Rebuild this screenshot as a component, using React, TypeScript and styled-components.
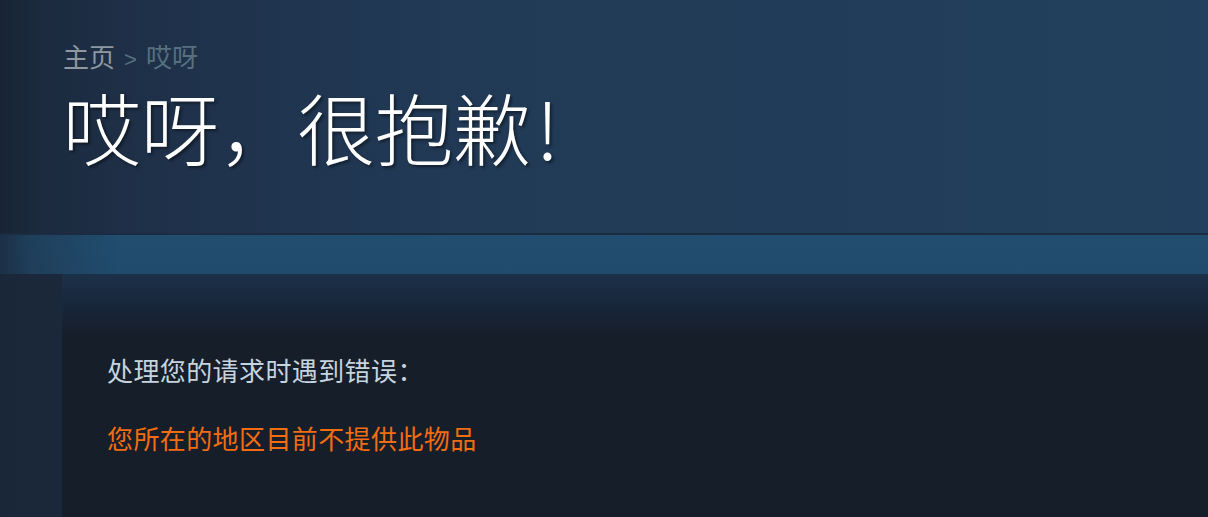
import React from 'react';
import styled, { createGlobalStyle } from 'styled-components';

const GlobalStyle = createGlobalStyle`
    html, body {
        margin: 0;
        padding: 0;
        background: #1b2838;
        overflow: hidden;
    }
    body {
        font-family: "Noto Sans CJK SC", "Noto Sans", sans-serif;
    }
`

const Page = styled.div`
    display: flex;
    flex-direction: column;
    width: 100%;
    height: 517px;
`

const Header = styled.div`
    height: 235px;
    padding: 41px 0 0 63px;
    box-sizing: border-box;
    background:
        linear-gradient(to right, rgba(22, 32, 46, 0.6) 0px, rgba(22, 32, 46, 0.25) 40px, rgba(22, 32, 46, 0) 140px),
        linear-gradient(to right, #1d2c42 0%, #213955 35%, #22405d 100%);
    border-bottom: 2px solid #1b2b40;
`

const Breadcrumbs = styled.div`
    display: flex;
    align-items: baseline;
    font-size: 26px;
    line-height: 30px;
    color: #8f98a0;
`

const Crumb = styled.span<{ $current?: boolean }>`
    color: ${p => (p.$current ? '#56707f' : '#8f98a0')};
`

const Sep = styled.span`
    color: #56707f;
    margin: 0 9px;
    font-family: "Liberation Sans", sans-serif;
    font-size: 22px;
    line-height: 22px;
`

const Title = styled.h1`
    margin: 16px 0 0 0;
    font-size: 78px;
    font-weight: 300;
    line-height: 78px;
    color: #ffffff;
    text-shadow: 2px 2px 3px rgba(0, 0, 0, 0.45);
`

const Bang = styled.span`
    margin-left: 5px;
`

const Content = styled.div`
    flex: 1;
    padding: 39px 0 0 62px;
    background:
        linear-gradient(to right, rgba(26, 38, 56, 0.75) 0px, rgba(26, 38, 56, 0.35) 30px, rgba(26, 38, 56, 0) 120px),
        linear-gradient(to bottom, #214d6f 0px, #214b6c 39px, #1b293c 39px, #1b293c 100%);
`

const Panel = styled.div`
    height: 100%;
    box-sizing: border-box;
    padding: 79px 45px 0 45px;
    background: linear-gradient(to bottom, #1b3149 0px, #182538 35px, #161e2a 62px, #161e2a 100%);
`

const Message = styled.div<{ $tone?: 'error' }>`
    font-size: 26px;
    line-height: 34px;
    letter-spacing: 0.4px;
    color: ${p => (p.$tone === 'error' ? '#f26c12' : '#c6d4df')};
    margin-bottom: 34px;
`

function App() {
    return (
        <>
            <GlobalStyle />
            <Page>
                <Header>
                    <Breadcrumbs>
                        <Crumb>主页</Crumb>
                        <Sep>&gt;</Sep>
                        <Crumb $current>哎呀</Crumb>
                    </Breadcrumbs>
                    <Title>哎呀，很抱歉<Bang>!</Bang></Title>
                </Header>
                <Content>
                    <Panel>
                        <Message>处理您的请求时遇到错误：</Message>
                        <Message $tone="error">您所在的地区目前不提供此物品</Message>
                    </Panel>
                </Content>
            </Page>
        </>
    );
}

export default App;
